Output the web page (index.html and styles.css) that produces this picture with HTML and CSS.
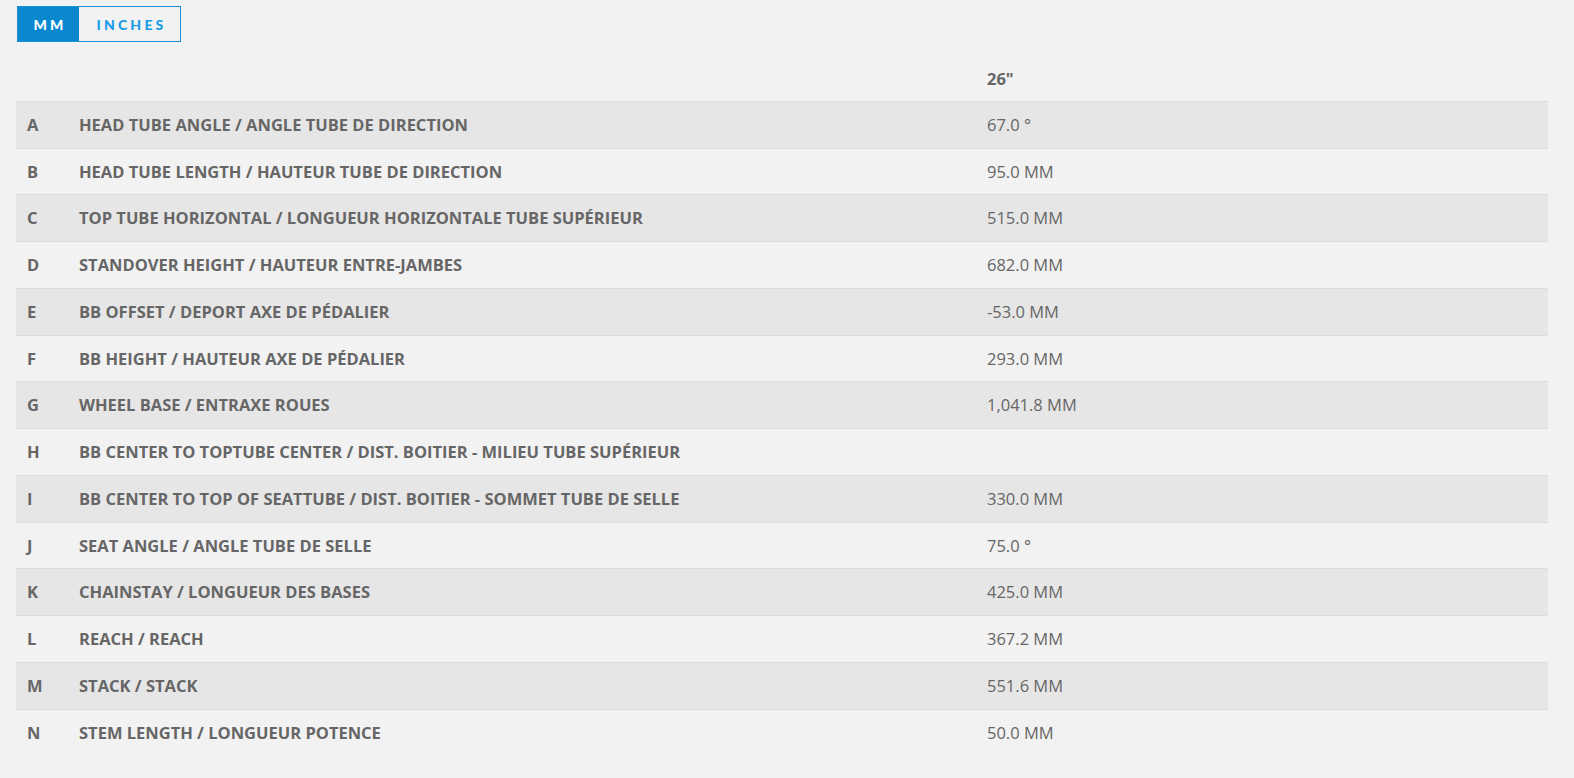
FILE: index.html
```html
<!DOCTYPE html>
<html>
<head>
<meta charset="utf-8">
<link rel="stylesheet" href="styles.css">
</head>
<body>
<div class="page">
  <div class="toggle">
    <span class="opt active">MM</span>
    <span class="opt">INCHES</span>
  </div>
  <table class="geo">
    <thead>
      <tr><th class="c-letter"></th><th class="c-label"></th><th class="c-val">26"</th></tr>
    </thead>
    <tbody>
      <tr><td class="c-letter">A</td><td class="c-label">HEAD TUBE ANGLE / ANGLE TUBE DE DIRECTION</td><td class="c-val">67.0 °</td></tr>
      <tr><td class="c-letter">B</td><td class="c-label">HEAD TUBE LENGTH / HAUTEUR TUBE DE DIRECTION</td><td class="c-val">95.0 MM</td></tr>
      <tr><td class="c-letter">C</td><td class="c-label">TOP TUBE HORIZONTAL / LONGUEUR HORIZONTALE TUBE SUPÉRIEUR</td><td class="c-val">515.0 MM</td></tr>
      <tr><td class="c-letter">D</td><td class="c-label">STANDOVER HEIGHT / HAUTEUR ENTRE-JAMBES</td><td class="c-val">682.0 MM</td></tr>
      <tr><td class="c-letter">E</td><td class="c-label">BB OFFSET / DEPORT AXE DE PÉDALIER</td><td class="c-val">-53.0 MM</td></tr>
      <tr><td class="c-letter">F</td><td class="c-label">BB HEIGHT / HAUTEUR AXE DE PÉDALIER</td><td class="c-val">293.0 MM</td></tr>
      <tr><td class="c-letter">G</td><td class="c-label">WHEEL BASE / ENTRAXE ROUES</td><td class="c-val">1,041.8 MM</td></tr>
      <tr><td class="c-letter">H</td><td class="c-label">BB CENTER TO TOPTUBE CENTER / DIST. BOITIER - MILIEU TUBE SUPÉRIEUR</td><td class="c-val"></td></tr>
      <tr><td class="c-letter">I</td><td class="c-label">BB CENTER TO TOP OF SEATTUBE / DIST. BOITIER - SOMMET TUBE DE SELLE</td><td class="c-val">330.0 MM</td></tr>
      <tr><td class="c-letter">J</td><td class="c-label">SEAT ANGLE / ANGLE TUBE DE SELLE</td><td class="c-val">75.0 °</td></tr>
      <tr><td class="c-letter">K</td><td class="c-label">CHAINSTAY / LONGUEUR DES BASES</td><td class="c-val">425.0 MM</td></tr>
      <tr><td class="c-letter">L</td><td class="c-label">REACH / REACH</td><td class="c-val">367.2 MM</td></tr>
      <tr><td class="c-letter">M</td><td class="c-label">STACK / STACK</td><td class="c-val">551.6 MM</td></tr>
      <tr><td class="c-letter">N</td><td class="c-label">STEM LENGTH / LONGUEUR POTENCE</td><td class="c-val">50.0 MM</td></tr>
    </tbody>
  </table>
</div>
</body>
</html>
```
FILE: styles.css
```css
html, body {
  margin: 0;
  padding: 0;
  background: #f2f2f2;
}
.page {
  padding: 6px 26px 0 16px;
  font-family: "Open Sans", "Noto Sans", sans-serif;
  color: #666;
}
.toggle {
  display: inline-flex;
  margin-left: 1px;
  border: 1px solid #1a8fd6;
  height: 34px;
}
.opt {
  display: flex;
  align-items: center;
  justify-content: center;
  font-family: Lato, "Open Sans", sans-serif;
  font-weight: 900;
  font-size: 14px;
  letter-spacing: 3.2px;
  color: #1a9be6;
}
.opt.active {
  background: #0a88cf;
  color: #fff;
  width: 61px;
  padding: 0 0 0 3px;
  box-sizing: border-box;
}
.opt:not(.active) {
  width: 101px;
  box-sizing: border-box;
  padding: 0 0 0 4px;
}
.geo {
  width: 1532px;
  border-collapse: collapse;
  margin-top: 14px;
  font-size: 16.5px;
}
.geo th, .geo td {
  text-align: left;
  padding: 12px 0;
  line-height: 21.75px;
  vertical-align: middle;
}
.geo th {
  font-weight: 700;
  padding-top: 12px;
  padding-bottom: 11px;
}
.geo td {
  border-top: 1px solid #dcdcdc;
}
.geo tbody tr:nth-child(odd) td {
  background: #e6e6e6;
}
.geo tbody tr:last-child td {
  border-bottom: 1px solid #f2f2f2;
}
.c-letter {
  width: 52px;
  padding-left: 11px !important;
  font-weight: 700;
}
.c-label {
  width: 908px;
  font-weight: 700;
}
.c-val {
  font-weight: 400;
}
.geo th.c-val {
  font-weight: 700;
}
```
